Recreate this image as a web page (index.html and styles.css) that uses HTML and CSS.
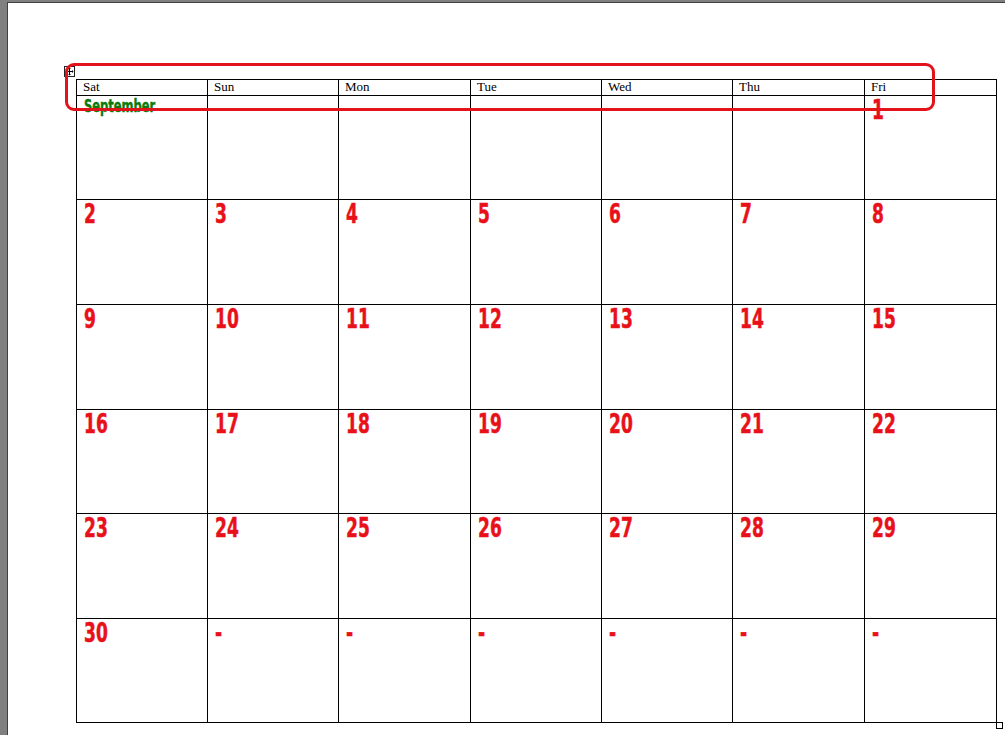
FILE: index.html
```html
<!DOCTYPE html>
<html lang="en">
<head>
<meta charset="utf-8">
<title>September Calendar</title>
<link rel="stylesheet" href="styles.css">
</head>
<body>
<div class="viewport">
  <div class="sheet">
    <div class="calendar">
      <div class="hd">Sat</div><div class="hd">Sun</div><div class="hd">Mon</div><div class="hd">Tue</div><div class="hd">Wed</div><div class="hd">Thu</div><div class="hd">Fri</div>

      <div class="cell"><span class="month">September</span></div><div class="cell"></div><div class="cell"></div><div class="cell"></div><div class="cell"></div><div class="cell"></div><div class="cell"><span class="num">1</span></div>

      <div class="cell"><span class="num">2</span></div><div class="cell"><span class="num">3</span></div><div class="cell"><span class="num">4</span></div><div class="cell"><span class="num">5</span></div><div class="cell"><span class="num">6</span></div><div class="cell"><span class="num">7</span></div><div class="cell"><span class="num">8</span></div>

      <div class="cell"><span class="num">9</span></div><div class="cell"><span class="num">10</span></div><div class="cell"><span class="num">11</span></div><div class="cell"><span class="num">12</span></div><div class="cell"><span class="num">13</span></div><div class="cell"><span class="num">14</span></div><div class="cell"><span class="num">15</span></div>

      <div class="cell"><span class="num">16</span></div><div class="cell"><span class="num">17</span></div><div class="cell"><span class="num">18</span></div><div class="cell"><span class="num">19</span></div><div class="cell"><span class="num">20</span></div><div class="cell"><span class="num">21</span></div><div class="cell"><span class="num">22</span></div>

      <div class="cell"><span class="num">23</span></div><div class="cell"><span class="num">24</span></div><div class="cell"><span class="num">25</span></div><div class="cell"><span class="num">26</span></div><div class="cell"><span class="num">27</span></div><div class="cell"><span class="num">28</span></div><div class="cell"><span class="num">29</span></div>

      <div class="cell"><span class="num">30</span></div><div class="cell"><span class="num">-</span></div><div class="cell"><span class="num">-</span></div><div class="cell"><span class="num">-</span></div><div class="cell"><span class="num">-</span></div><div class="cell"><span class="num">-</span></div><div class="cell"><span class="num">-</span></div>
    </div>
  </div>
</div>

<div class="move-handle">
  <svg width="11" height="11" viewBox="0 0 11 11">
    <rect x="0.5" y="0.5" width="10" height="10" fill="#fff" stroke="#222"/>
    <path d="M5.5 2v7M2 5.5h7" stroke="#000" stroke-width="1" fill="none"/>
    <path d="M5.5 1.5l-1.5 1.5h3zM5.5 9.5l-1.5-1.5h3zM1.5 5.5l1.5-1.5v3zM9.5 5.5l-1.5-1.5v3z" fill="#000"/>
  </svg>
</div>
<div class="highlight"></div>
<div class="resize-handle"></div>
</body>
</html>
```

FILE: styles.css
```css
html, body {
  margin: 0;
  padding: 0;
  background: #ffffff;
}

body {
  position: relative;
  width: 1005px;
  height: 735px;
  overflow: hidden;
}

.viewport {
  box-sizing: border-box;
  height: 735px;
  border-top: 2px solid #808080;
  border-left: 7px solid #808080;
}

.sheet {
  box-sizing: border-box;
  height: 100%;
  border-top: 1px solid #404040;
  border-left: 1px solid #404040;
  padding: 76px 0 0 68px;
}

.calendar {
  display: grid;
  grid-template-columns: 130px 130px 131px 130px 130px 131px 131px;
  grid-template-rows: 15px 103px 104px 104px 103px 104px 103px;
  gap: 1px;
  width: 921px;
  box-sizing: border-box;
  border: 1px solid #000;
  background: #000;
}

.hd {
  background: #fff;
  font-family: "Liberation Serif", "Times New Roman", serif;
  font-size: 13px;
  line-height: 14px;
  padding-left: 6px;
  color: #000;
}

.cell {
  background: #fff;
  padding: 1px 0 0 7px;
  overflow: visible;
}

.num {
  display: inline-block;
  font-family: "DejaVu Sans Condensed", "Liberation Sans", sans-serif;
  font-weight: bold;
  font-size: 26px;
  line-height: 26px;
  color: #e8111a;
  -webkit-text-stroke: 0.5px #e8111a;
  transform: scaleX(0.73);
  transform-origin: left center;
}

.month {
  display: inline-block;
  font-family: "DejaVu Sans Condensed", "Liberation Sans", sans-serif;
  font-weight: bold;
  font-size: 18px;
  line-height: 18px;
  color: #0a7a0a;
  -webkit-text-stroke: 0.4px #0a7a0a;
  transform: scaleX(0.71);
  transform-origin: left center;
}

.move-handle {
  position: absolute;
  left: 64px;
  top: 66px;
  width: 11px;
  height: 11px;
  line-height: 0;
}

.highlight {
  position: absolute;
  left: 65px;
  top: 63px;
  width: 864px;
  height: 42px;
  border: 3px solid #e2131b;
  border-radius: 9px;
  pointer-events: none;
}

.resize-handle {
  position: absolute;
  left: 996px;
  top: 722px;
  width: 5px;
  height: 5px;
  border: 1px solid #000;
  background: #fff;
}
```
